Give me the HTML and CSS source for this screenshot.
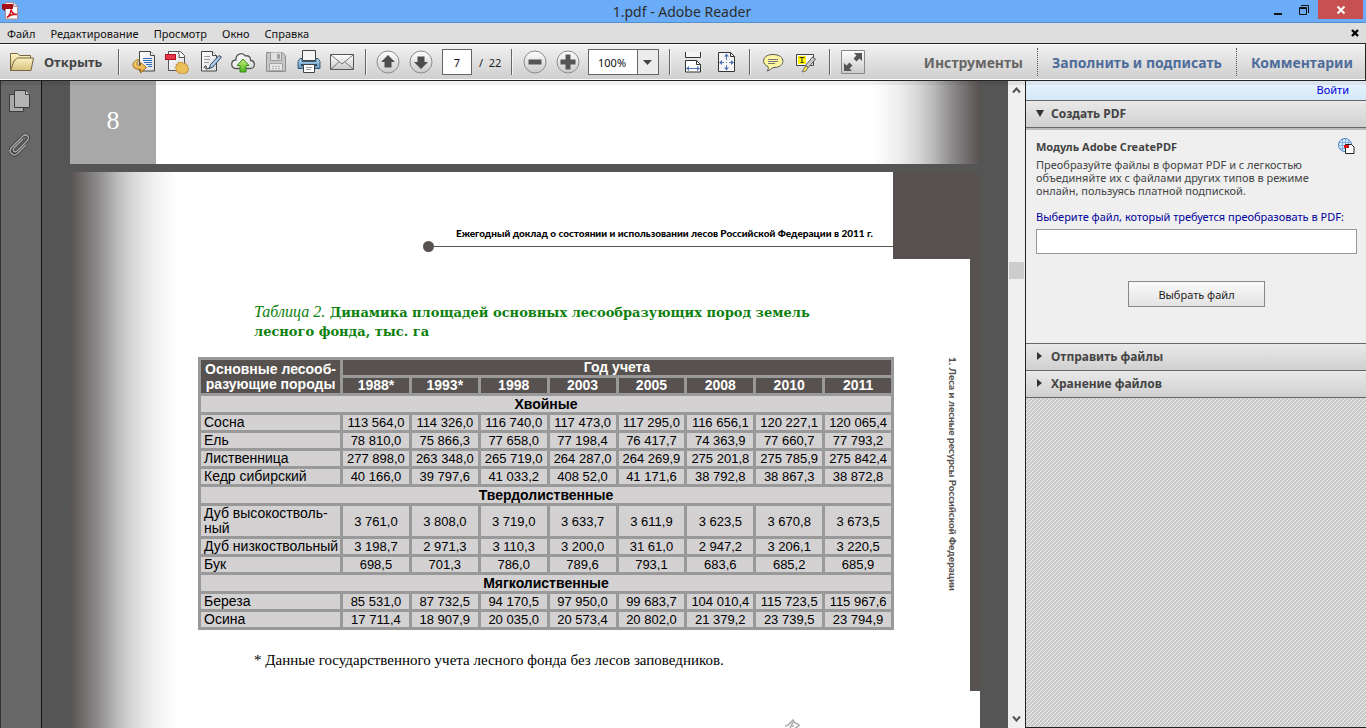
FILE: index.html
```html
<!DOCTYPE html>
<html lang="ru">
<head>
<meta charset="utf-8">
<title>1.pdf - Adobe Reader</title>
<link rel="stylesheet" href="styles.css">
</head>
<body>
<svg class="defs" width="0" height="0" aria-hidden="true">
  <defs>
    <linearGradient id="paper" x1="0" y1="0" x2="1" y2="1"><stop offset="0" stop-color="#fff"/><stop offset="1" stop-color="#dcdcdc"/></linearGradient>
    <linearGradient id="gold" x1="0" y1="0" x2="0" y2="1"><stop offset="0" stop-color="#ffe08a"/><stop offset="1" stop-color="#e0a02c"/></linearGradient>
    <linearGradient id="folder" x1="0" y1="0" x2="0" y2="1"><stop offset="0" stop-color="#fdf3c4"/><stop offset="1" stop-color="#d6bf7c"/></linearGradient>
    <linearGradient id="knob" x1="0" y1="0" x2="0" y2="1"><stop offset="0" stop-color="#fff"/><stop offset="1" stop-color="#c9c9c9"/></linearGradient>
    <linearGradient id="blue" x1="0" y1="0" x2="0" y2="1"><stop offset="0" stop-color="#bcd9f0"/><stop offset="1" stop-color="#5d93bd"/></linearGradient>
    <linearGradient id="green" x1="0" y1="0" x2="0" y2="1"><stop offset="0" stop-color="#c8f07e"/><stop offset="1" stop-color="#4cb51e"/></linearGradient>
  </defs>
</svg>
<div class="window">
  <header class="titlebar">
    <svg class="app-icon" width="18" height="18" viewBox="0 0 18 18"><path d="M4.500 .5h8l4 4v12.500h-12z" fill="#fff" stroke="#b98c8c"/><path d="M12.500.5v4h4" fill="#ddd" stroke="#b98c8c"/><rect x="1" y="2" width="11" height="5" fill="#a60f18"/><path d="M1 7h3v2z" fill="#6c0a0f"/><path d="M6 15.500c2-1 4-5 4-8 1 4 3 5 6 5-3-.5-7 .5-10 3z" fill="none" stroke="#d3141d" stroke-width="1.500"/></svg>
    <h1 class="title">1.pdf - Adobe Reader</h1>
    <div class="window-buttons">
      <button type="button" aria-label="Свернуть"><svg width="12" height="12" viewBox="0 0 12 12"><path d="M2 9h8v2H2z" fill="#111"/></svg></button>
      <button type="button" aria-label="Развернуть"><svg width="12" height="12" viewBox="0 0 12 12"><path d="M1.500 3.500h7v7h-7zM1 4.500h8M3 1.500h7.500V9" fill="none" stroke="#111"/></svg></button>
      <button type="button" class="close" aria-label="Закрыть"><svg width="10" height="10" viewBox="0 0 10 10"><path d="M1.500 1.500l7 7M8.500 1.500l-7 7" stroke="#fff" stroke-width="2"/></svg></button>
    </div>
  </header>

  <nav class="menubar">
    <button type="button">Файл</button>
    <button type="button">Редактирование</button>
    <button type="button">Просмотр</button>
    <button type="button">Окно</button>
    <button type="button">Справка</button>
    <button type="button" class="close-doc" aria-label="Закрыть документ"><svg width="8" height="8" viewBox="0 0 8 8"><path d="M1 1l6 6M7 1l-6 6" stroke="#000" stroke-width="2.400"/></svg></button>
  </nav>

  <div class="toolbar">
    <button type="button" class="open"><svg width="24" height="20" viewBox="0 0 24 20"><path d="M.5 18.500V1.500h7l2 2h11v4" fill="url(#folder)" stroke="#75683f"/><path d="M.5 18.500L4 9l3.500-3H23.500L21 18.500z" fill="url(#folder)" stroke="#75683f"/></svg>Открыть</button>
    <div class="group files">
      <button type="button" class="tool" aria-label="Экспорт"><svg viewBox="0 0 24 24"><path d="M7.500 1.500h11l4 4v15.500h-15z" fill="url(#paper)" stroke="#444"/><path d="M18.500 1.500v4h4" fill="#fff" stroke="#444"/><path d="M11 8.500h9M11 10.500h9M12 12.500h8M14 14.500h6M16 16.500h4" stroke="#2f6fc4"/><path d="M8 9.500c-5 0-7 3-7 5.500 0 3 3 4.500 7.500 4.500v3.500l6-5.500-6-5v3c-3 0-4-.5-3.500-2.500.5-1.500 1.500-2.500 3-3.500z" fill="url(#gold)" stroke="#9a6a1c"/></svg></button>
      <button type="button" class="tool" aria-label="Создать PDF"><svg viewBox="0 0 24 24"><path d="M3.500 1.500h12l4 4v15h-16z" fill="url(#paper)" stroke="#555"/><path d="M13 1.500q2 3 1 6h5.500" fill="#fff" stroke="#555"/><rect x=".5" y="4.500" width="10" height="5" fill="#e8374a" stroke="#a81323"/><path d="M17 12l1.500 1.500 2-.5.500 2 2 .5-.5 2L24 19l-1.500 1 .5 2-2 .5-.5 1.500-2-.5L17 24l-1.500-1-2 .5-.5-2-2-.5.500-2L10 17.500l1.500-1.500-.5-1.500 2-.5.500-2 2 .5z" fill="#edbf58" stroke="#b98935" stroke-width=".8"/></svg></button>
      <button type="button" class="tool" aria-label="Подписать"><svg viewBox="0 0 24 24"><path d="M3.500 1.500h11l4 4v15.500h-15z" fill="url(#paper)" stroke="#444"/><path d="M14.500 1.500v4h4" fill="#fff" stroke="#444"/><path d="M6 6.500h6M6 9.500h6M6 12.500h5" stroke="#999"/><path d="M21 5.500l2.500 1.500L15 17l-3.500 1.500 1-4z" fill="#a9c9e8" stroke="#34495e"/><path d="M6 18c1-3 3-3 2 0s3-1 4 .500" fill="none" stroke="#222"/></svg></button>
      <button type="button" class="tool" aria-label="Отправить в облако"><svg viewBox="0 0 24 24"><path d="M5.500 18.500c-6 0-6.500-8-.5-8.500-.5-6 6-8.500 9.500-4 3-1 5.500 1.500 5 4.500 5.500.5 5 8-.5 8z" fill="url(#paper)" stroke="#555" stroke-width="1.300"/><path d="M12 9l6 6.500h-3v6.500H9v-6.500H6z" fill="url(#green)" stroke="#3b8a1a"/></svg></button>
      <button type="button" class="tool" aria-label="Сохранить"><svg viewBox="0 0 24 24"><path d="M2.500 2.500h16l3 3v16h-19z" fill="#c6c6c6" stroke="#8f8f8f"/><path d="M6.500 2.500v8h11v-8" fill="#e0e0e0" stroke="#999"/><path d="M13.500 4.500h2v4h-2z" fill="#aaa" stroke="#999"/><path d="M5.500 13.500h13v7h-13z" fill="#e6e6e6" stroke="#a5a5a5"/><path d="M8 16.500h8M8 18.500h8" stroke="#b3b3b3" stroke-dasharray="2 1"/></svg></button>
      <button type="button" class="tool" aria-label="Печать"><svg viewBox="0 0 24 24"><path d="M5.500.5h13v10h-13z" fill="#f5f5f5" stroke="#444"/><path d="M3 8.500h2v3h14v-3h2l2 3v7h-22v-7z" fill="url(#blue)" stroke="#395d78"/><path d="M4 15h16" stroke="#2f4758" stroke-width="2"/><path d="M6.500 14.500h11v8h-11z" fill="#fff" stroke="#444"/><path d="M9 17.500h6M9 19.500h5" stroke="#999"/></svg></button>
      <button type="button" class="tool" aria-label="Почта"><svg viewBox="0 0 24 24"><path d="M.5 4.500h23v15H.5z" fill="url(#knob)" stroke="#555"/><path d="M1 5l11 9 11-9M1 19l8-7M23 19l-8-7" fill="none" stroke="#777"/></svg></button>
    </div>
    <div class="group pages">
      <button type="button" class="tool" aria-label="Предыдущая страница"><svg viewBox="0 0 24 24"><circle cx="12" cy="12" r="11" fill="url(#knob)" stroke="#8c8c8c"/><path d="M12 5l7 7h-3.500v5.500h-7V12H5z" fill="#4d4d4d"/></svg></button>
      <button type="button" class="tool" aria-label="Следующая страница"><svg viewBox="0 0 24 24"><circle cx="12" cy="12" r="11" fill="url(#knob)" stroke="#8c8c8c"/><path d="M12 19l7-7h-3.500V6.500h-7V12H5z" fill="#4d4d4d"/></svg></button>
      <input class="page-number" type="text" value="7" aria-label="Номер страницы">
      <span class="page-count">/&nbsp; 22</span>
    </div>
    <div class="group zoom">
      <button type="button" class="tool" aria-label="Уменьшить"><svg viewBox="0 0 24 24"><circle cx="12" cy="12" r="11" fill="url(#knob)" stroke="#8c8c8c"/><path d="M5.500 9.500h13v5h-13z" fill="#555"/></svg></button>
      <button type="button" class="tool" aria-label="Увеличить"><svg viewBox="0 0 24 24"><circle cx="12" cy="12" r="11" fill="url(#knob)" stroke="#8c8c8c"/><path d="M9.500 4.500h5v5h5v5h-5v5h-5v-5h-5v-5h5z" fill="#555"/></svg></button>
      <div class="combo">
        <select aria-label="Масштаб"><option>100%</option></select>
        <svg width="9" height="5" viewBox="0 0 9 5"><path d="M0 0h9L4.500 5z" fill="#444"/></svg>
      </div>
    </div>
    <div class="group">
      <button type="button" class="tool" aria-label="По ширине"><svg viewBox="0 0 24 24"><path d="M4.500 2v5.500h15V2" fill="#f4f4f4" stroke="#333"/><path d="M4.500 22V10.500h11l4 4V22z" fill="#fff" stroke="#333"/><path d="M15.500 10.500v4h4" fill="none" stroke="#333"/><path d="M6 18.500h12" stroke="#5674b8"/><path d="M5 18.500l3-2.500v5zM19 18.500l-3-2.500v5z" fill="#5674b8"/></svg></button>
      <button type="button" class="tool" aria-label="Страница целиком"><svg viewBox="0 0 24 24"><path d="M4.500 2.500h12l4 4v15h-16z" fill="#f6f6f6" stroke="#333"/><path d="M16.500 2.500v4h4" fill="none" stroke="#333"/><path d="M12.500 5v5M12.500 15v4M6 12.500h4M15 12.500h4M12 12.500h1" stroke="#5674b8"/><path d="M12.500 3.500l2.500 3h-5zM12.500 20.500l2.500-3h-5zM5 12.500l3-2.500v5zM20 12.500l-3-2.500v5z" fill="#5674b8"/></svg></button>
    </div>
    <div class="group">
      <button type="button" class="tool" aria-label="Заметка"><svg viewBox="0 0 24 24"><path d="M12 4.500c13 0 13 13 1 13-2 0-4 3-7 3.500 1.500-1.500 1.500-3 1-4.500C0 14 1 4.500 12 4.500z" fill="#fff7a0" stroke="#555"/><path d="M7 9.500h10M7 11.500h10M7 13.500h7" stroke="#777"/></svg></button>
      <button type="button" class="tool" aria-label="Выделить текст"><svg viewBox="0 0 24 24"><path d="M2.500 4.500h17v11h-17z" fill="#f7f7f7" stroke="#444"/><path d="M4 6h8v8H4z" fill="#fff200"/><path d="M5.500 7.500h5M8 7.500v5.500M6.500 12.500h3" stroke="#333"/><path d="M18.500 7l3 2-7 8.500-3-2z" fill="#ccc" stroke="#555"/><path d="M11.500 16l2.500 1.500-2 3.500-4 1z" fill="#ffe53b" stroke="#777"/></svg></button>
    </div>
    <div class="group">
      <button type="button" class="tool" aria-label="Полный экран"><svg viewBox="0 0 24 24"><path d="M.5.500h23v23H.5z" fill="url(#knob)" stroke="#888"/><path d="M13 3h8v8l-2.500-2.500-3 3-3-3 3-3zM11 21H3v-8l2.500 2.500 3-3 3 3-3 3z" fill="#555"/></svg></button>
    </div>
    <div class="panes">
      <button type="button" class="pane active">Инструменты</button>
      <button type="button" class="pane">Заполнить и подписать</button>
      <button type="button" class="pane">Комментарии</button>
    </div>
  </div>

  <div class="workspace">
    <aside class="sidebar">
      <button type="button" aria-label="Миниатюры страниц"><svg width="22" height="24" viewBox="0 0 22 24"><path d="M.5 5.500h14v17H.5z" fill="#aaa" stroke="#3c3c3c"/><path d="M5.500 1.500h11l4 4v13h-15z" fill="#b4b4b4" stroke="#3c3c3c"/><path d="M16.500 1.500v4h4" fill="#d5d5d5" stroke="#3c3c3c"/></svg></button>
      <button type="button" aria-label="Вложенные файлы"><svg width="22" height="24" viewBox="0 0 22 24"><path d="M14 6L5 15c-2 3 1 5 3 3L18 8c4-4-1-8-4-5L2.500 14.500c-4 5 2 9.500 6 6L17 12" fill="none" stroke="#333" stroke-width="3"/><path d="M14 6L5 15c-2 3 1 5 3 3L18 8c4-4-1-8-4-5L2.500 14.500c-4 5 2 9.500 6 6L17 12" fill="none" stroke="#a9a9a9" stroke-width="1.500"/></svg></button>
    </aside>

    <main class="document">
      <section class="sheet sheet-prev"><div class="folio">8</div></section>
      <section class="sheet sheet-current">
        <div class="running-head">Ежегодный доклад о состоянии и использовании лесов Российской Федерации в 2011 г.</div>
        <h2 class="table-title"><em>Таблица 2.</em> Динамика площадей основных лесообразующих пород земель<br>лесного фонда, тыс. га</h2>
        <div class="table-row">
          <table class="data">
            <colgroup><col class="species"><col span="8"></colgroup>
            <thead>
              <tr><th rowspan="2">Основные лесооб-<br>разующие породы</th><th colspan="8">Год учета</th></tr>
              <tr><th>1988*</th><th>1993*</th><th>1998</th><th>2003</th><th>2005</th><th>2008</th><th>2010</th><th>2011</th></tr>
            </thead>
            <tbody>
              <tr class="kind"><th colspan="9">Хвойные</th></tr>
              <tr><th>Сосна</th><td>113 564,0</td><td>114 326,0</td><td>116 740,0</td><td>117 473,0</td><td>117 295,0</td><td>116 656,1</td><td>120 227,1</td><td>120 065,4</td></tr>
              <tr><th>Ель</th><td>78 810,0</td><td>75 866,3</td><td>77 658,0</td><td>77 198,4</td><td>76 417,7</td><td>74 363,9</td><td>77 660,7</td><td>77 793,2</td></tr>
              <tr><th>Лиственница</th><td>277 898,0</td><td>263 348,0</td><td>265 719,0</td><td>264 287,0</td><td>264 269,9</td><td>275 201,8</td><td>275 785,9</td><td>275 842,4</td></tr>
              <tr><th>Кедр сибирский</th><td>40 166,0</td><td>39 797,6</td><td>41 033,2</td><td>408 52,0</td><td>41 171,6</td><td>38 792,8</td><td>38 867,3</td><td>38 872,8</td></tr>
              <tr class="kind"><th colspan="9">Твердолиственные</th></tr>
              <tr><th>Дуб высокостволь-<br>ный</th><td>3 761,0</td><td>3 808,0</td><td>3 719,0</td><td>3 633,7</td><td>3 611,9</td><td>3 623,5</td><td>3 670,8</td><td>3 673,5</td></tr>
              <tr><th>Дуб низкоствольный</th><td>3 198,7</td><td>2 971,3</td><td>3 110,3</td><td>3 200,0</td><td>31 61,0</td><td>2 947,2</td><td>3 206,1</td><td>3 220,5</td></tr>
              <tr><th>Бук</th><td>698,5</td><td>701,3</td><td>786,0</td><td>789,6</td><td>793,1</td><td>683,6</td><td>685,2</td><td>685,9</td></tr>
              <tr class="kind"><th colspan="9">Мягколиственные</th></tr>
              <tr><th>Береза</th><td>85 531,0</td><td>87 732,5</td><td>94 170,5</td><td>97 950,0</td><td>99 683,7</td><td>104 010,4</td><td>115 723,5</td><td>115 967,6</td></tr>
              <tr><th>Осина</th><td>17 711,4</td><td>18 907,9</td><td>20 035,0</td><td>20 573,4</td><td>20 802,0</td><td>21 379,2</td><td>23 739,5</td><td>23 794,9</td></tr>
            </tbody>
          </table>
          <div class="chapter">1. Леса и лесные ресурсы Российской Федерации</div>
        </div>
        <p class="footnote">* Данные государственного учета лесного фонда без лесов заповедников.</p>
        <svg class="ornament" width="24" height="12" viewBox="0 0 24 12"><path d="M0 8l3-1 5-5 2 3 3 1 1 2M8 4l-3 6M6 8h3M9 11l6-4" fill="none" stroke="#aaa" stroke-width="1.500"/></svg>
      </section>
    </main>

    <div class="scrollbar">
      <svg width="9" height="7" viewBox="0 0 9 7"><path d="M1 5.500l3.500-4 3.500 4" fill="none" stroke="#555" stroke-width="2"/></svg>
      <div class="track"><div class="thumb"></div></div>
      <svg width="9" height="7" viewBox="0 0 9 7"><path d="M1 1.500l3.500 4 3.500-4" fill="none" stroke="#555" stroke-width="2"/></svg>
    </div>

    <aside class="panel">
      <div class="signin"><a href="#">Войти</a></div>
      <button type="button" class="section"><svg width="9" height="9" viewBox="0 0 9 9"><path d="M0 1h8L4 8z" fill="#333"/></svg>Создать PDF</button>
      <form class="create">
        <div class="create-head">
          <h3>Модуль Adobe CreatePDF</h3>
          <svg width="17" height="17" viewBox="0 0 17 17"><circle cx="7" cy="7" r="6.500" fill="#d6e9fa" stroke="#4b82c4"/><path d="M1 4.500h12M.5 7.500h13M1 10.500h12M4.500 1v12M7.500.500v13M10.500 1v12" stroke="#6fa3dc" stroke-width=".8"/><path d="M7.500 6.500h6l2.500 2.500v6.500H7.500z" fill="#fff" stroke="#222"/><path d="M6 7h5v3H6z" fill="#d9101c"/></svg>
        </div>
        <p>Преобразуйте файлы в формат PDF и с легкостью объединяйте их с файлами других типов в режиме онлайн, пользуясь платной подпиской.</p>
        <label for="file">Выберите файл, который требуется преобразовать в PDF:</label>
        <input id="file" type="text">
        <button type="button" class="choose">Выбрать файл</button>
      </form>
      <button type="button" class="section"><svg width="9" height="9" viewBox="0 0 9 9"><path d="M1 0v8l5-4z" fill="#333"/></svg>Отправить файлы</button>
      <button type="button" class="section"><svg width="9" height="9" viewBox="0 0 9 9"><path d="M1 0v8l5-4z" fill="#333"/></svg>Хранение файлов</button>
      <div class="hatch"></div>
    </aside>
  </div>
</div>
</body>
</html>
```
FILE: styles.css
```css
* { box-sizing: border-box; }
body { margin: 0; font-family: "Noto Sans", "Open Sans", sans-serif; font-size: 11px; color: #111; }
button, input, select { font: inherit; color: inherit; }
button { border: 0; padding: 0; background: none; white-space: nowrap; }
svg { display: block; flex: none; }
.defs { position: absolute; }
.window { display: flex; flex-direction: column; height: 100vh; overflow: hidden; }

.titlebar { display: grid; grid-template-columns: 1fr auto 1fr; align-items: start; height: 23px; flex: none; padding: 0 3px 0 1px; background: #6aacf7; border-bottom: 1px solid #5590cc; }
.app-icon { margin-top: 2px; }
.title { margin: 0; font-size: 14px; font-weight: 400; line-height: 23px; color: #2c2c2c; }
.window-buttons { display: flex; justify-content: flex-end; }
.window-buttons button { width: 26px; height: 19px; display: grid; place-items: center; }
.window-buttons .close { width: 45px; margin-left: 1px; background: #c75050; }

.menubar { display: flex; align-items: center; gap: 15px; height: 20px; flex: none; padding: 0 7px; background: #dedede; }
.menubar .close-doc { margin-left: auto; }

.toolbar { position: relative; z-index: 1; display: flex; align-items: center; height: 38px; flex: none; padding: 0 12px 0 10px; background: linear-gradient(#f2f2f2, #cecece); border: solid #222; border-width: 1px 1px 1px 0; box-shadow: inset 0 1px #fff, inset 0 -1px #fff, 0 4px rgba(0, 0, 0, .06); }
.open { display: flex; align-items: center; gap: 10px; width: 108px; font-size: 13px; font-weight: 700; color: #444; }
.group { display: flex; align-items: center; height: 26px; border-left: 1px solid #666; box-shadow: inset 1px 0 #f4f4f4; padding: 0 7px 0 6px; }
.group.files { padding: 0 7px 0 8px; }
.group.pages { padding: 0 8px 0 5px; }
.group.zoom { padding: 0 10px 0 6px; }
.tool { width: 33px; display: grid; place-items: center; }
.tool svg { width: 24px; height: 24px; }
.page-number { width: 30px; height: 26px; margin: 0 7px 0 5px; padding: 0; text-align: center; border: 1px solid #666; background: #fff; }
.page-count { width: 24px; white-space: nowrap; color: #222; }
.combo { display: grid; grid-template-columns: 48px 21px; align-items: center; height: 26px; margin-left: 4px; border: 1px solid #666; background: linear-gradient(90deg, #fff 48px, #666 48px, #666 49px, #ececec 49px); }
.combo select { grid-area: 1 / 1 / 2 / 3; appearance: none; width: 100%; height: 24px; padding: 0 0 0 9px; border: 0; background: transparent; }
.combo svg { grid-area: 1 / 2; justify-self: center; pointer-events: none; }
.panes { display: flex; margin-left: auto; }
.pane { height: 28px; padding: 0 14px; border-left: 1px dotted #555; font-size: 14px; font-weight: 700; color: #4e6c9a; }
.pane.active { border-left: 0; color: #666; }
.pane:last-child { padding-right: 0; }

.workspace { display: flex; flex: 1; min-height: 0; }
.sidebar { width: 42px; flex: none; display: flex; flex-direction: column; align-items: center; gap: 20px; padding: 8px 3px 0 0; background: #676767; border-left: 1px solid #333; border-right: 1px solid #111; }

.document { flex: 1; min-width: 0; display: flex; flex-direction: column; gap: 8px; padding: 0 28px; background: #555; overflow: hidden; }
.sheet { flex: none; background-color: #fff; background-repeat: no-repeat; }
.sheet-prev { height: 83px; background-image: linear-gradient(270deg, #575250, #928f91 30px, #bbb 47px, #d8d8d8 63px, #ededed 80px, #fff 107px); }
.folio { width: 86px; height: 83px; background: #a8a8a8; color: #fff; font: 26px/80px "Liberation Serif", serif; text-align: center; }
.sheet-current { flex: 1 0 556px; padding-top: 50px; background-image: linear-gradient(#575250, #575250), linear-gradient(#575250, #575250), linear-gradient(90deg, #575250, #928f91 30px, #bbb 47px, #d8d8d8 63px, #ededed 80px, #fff 107px); background-position: top right, top right, left; background-size: 87px 87px, 10px 519px, 107px 100%; }
.running-head { position: relative; margin: 0 87px 0 358px; padding-right: 20px; height: 25px; border-bottom: 1px solid #575250; font: 900 10px/22px Lato, "Liberation Sans", sans-serif; color: #000; text-align: right; white-space: nowrap; }
.running-head::before { content: ""; position: absolute; left: -5px; bottom: -6px; width: 11px; height: 11px; border-radius: 50%; background: #575250; }
.table-title { margin: 55px 0 0 184px; font: bold 13px/19px "DejaVu Serif", serif; color: #0c800c; white-space: nowrap; }
.table-title em { font: italic 16px/19px "Liberation Serif", serif; }
.table-row { display: flex; align-items: flex-start; justify-content: space-between; margin: 16px 20px 0 128px; }
.data { width: 696px; table-layout: fixed; border-spacing: 3px; background: #999; font-family: "Liberation Sans", Arial, sans-serif; font-size: 13px; line-height: 15px; color: #000; }
.data .species { width: 139px; }
.data th, .data td { height: 15px; padding: 0; background: #d3d1d2; text-align: center; white-space: nowrap; }
.data th { font-size: 14px; }
.data tbody th { padding-left: 3px; font-weight: 400; text-align: left; }
.data thead th { background: #575250; color: #fff; }
.data .kind th { height: 16px; padding: 0; font-weight: 700; text-align: center; }
.chapter { writing-mode: vertical-rl; font: 900 10px/14px Lato, "Liberation Sans", sans-serif; color: #575250; white-space: nowrap; }
.footnote { margin: 20px 0 0 184px; font: 15px/20px "Liberation Serif", serif; color: #000; }
.ornament { margin: 48px 0 0 715px; }

.scrollbar { width: 17px; flex: none; display: flex; flex-direction: column; align-items: center; gap: 8px; padding: 6px 0; background: #f0f0f0; }
.track { flex: 1; width: 15px; display: grid; grid-template-rows: 161fr 17px 429fr; }
.thumb { grid-row: 2; background: #cdcdcd; }

.panel { width: 341px; flex: none; display: flex; flex-direction: column; border-left: 1px solid #222; background: #efefef; color: #444; }
.signin { padding-right: 17px; height: 19px; line-height: 18px; text-align: right; background: linear-gradient(#eaf5ff, #d4e8f8); }
.signin a { color: #00d; text-decoration: none; }
.section { display: flex; align-items: center; gap: 6px; height: 27px; padding: 0 0 2px 10px; border-top: 1px solid #666; background: linear-gradient(#e9e9e9, #d0d0d0); font-size: 12px; font-weight: 700; }
.create { display: flex; flex-direction: column; padding: 10px 9px 36px 10px; border-top: 1px solid #666; box-shadow: inset 0 2px #bbb; line-height: 13px; }
.create-head { display: flex; justify-content: space-between; padding-right: 2px; }
.create h3 { margin: 0; font-size: 11px; line-height: 17px; }
.create p { margin: 3px 36px 12px 0; }
.create label { color: #00009c; white-space: nowrap; line-height: 15px; }
.create input { height: 25px; margin-top: 5px; border: 1px solid #999; background: #fff; }
.choose { align-self: center; width: 137px; height: 26px; margin-top: 27px; border: 1px solid #888; background: linear-gradient(#fafafa, #e2e2e2); color: #222; }
.hatch { flex: 1; border-top: 1px solid #666; border-bottom: 1px solid #222; background: linear-gradient(135deg, #c9c9c9 44%, #f0f0f0 44%, #f0f0f0 56%, #c9c9c9 56%) 0 0 / 4px 4px; }
```
